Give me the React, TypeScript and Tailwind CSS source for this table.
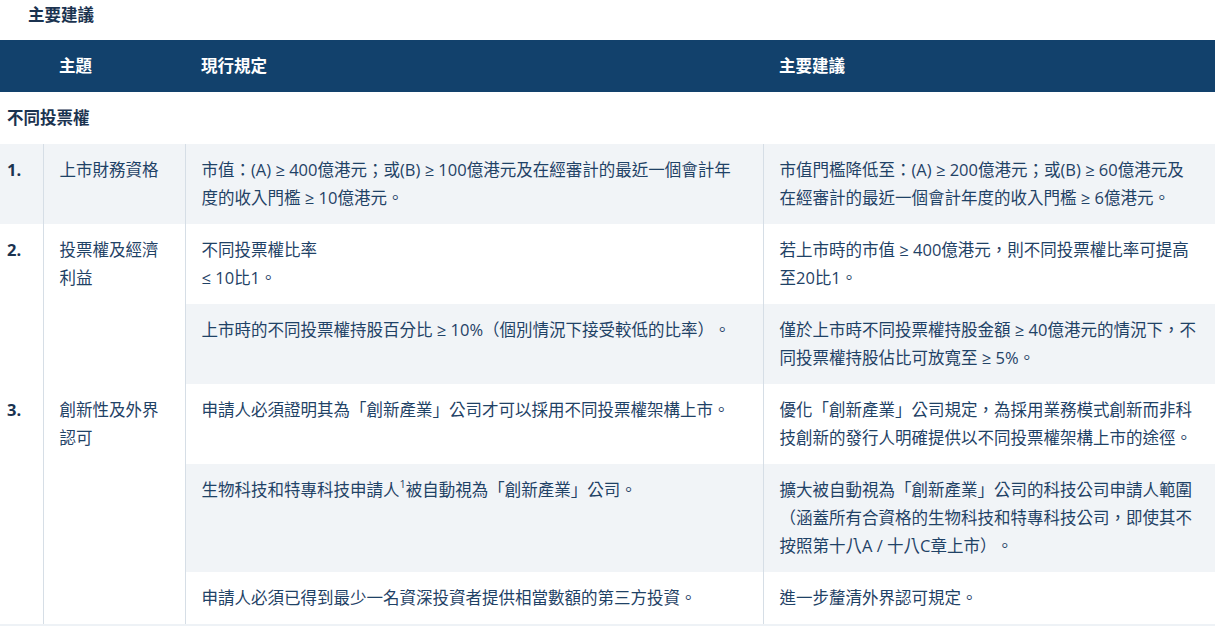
import React from 'react';

const font = { fontFamily: '"Open Sans", "Noto Sans CJK TC", sans-serif' };

interface Row {
  no?: string;
  topic?: string;
  span?: number;
  current: React.ReactNode;
  proposal: React.ReactNode;
  shaded: boolean;
}

const rows: Row[] = [
  {
    no: '1.',
    topic: '上市財務資格',
    span: 1,
    current: '市值：(A) ≥ 400億港元；或(B) ≥ 100億港元及在經審計的最近一個會計年度的收入門檻 ≥ 10億港元。',
    proposal: '市值門檻降低至：(A) ≥ 200億港元；或(B) ≥ 60億港元及在經審計的最近一個會計年度的收入門檻 ≥ 6億港元。',
    shaded: true,
  },
  {
    no: '2.',
    topic: '投票權及經濟利益',
    span: 2,
    current: (
      <>
        不同投票權比率
        <br />≤ 10比1。
      </>
    ),
    proposal: '若上市時的市值 ≥ 400億港元，則不同投票權比率可提高至20比1。',
    shaded: false,
  },
  {
    current: '上市時的不同投票權持股百分比 ≥ 10%（個別情況下接受較低的比率）。',
    proposal: '僅於上市時不同投票權持股金額 ≥ 40億港元的情況下，不同投票權持股佔比可放寬至 ≥ 5%。',
    shaded: true,
  },
  {
    no: '3.',
    topic: '創新性及外界認可',
    span: 3,
    current: '申請人必須證明其為「創新產業」公司才可以採用不同投票權架構上市。',
    proposal: '優化「創新產業」公司規定，為採用業務模式創新而非科技創新的發行人明確提供以不同投票權架構上市的途徑。',
    shaded: false,
  },
  {
    current: (
      <>
        生物科技和特專科技申請人<sup className="text-[11px] align-[3px] leading-none">1</sup>被自動視為「創新產業」公司。
      </>
    ),
    proposal: '擴大被自動視為「創新產業」公司的科技公司申請人範圍（涵蓋所有合資格的生物科技和特專科技公司，即使其不按照第十八A / 十八C章上市）。',
    shaded: true,
  },
  {
    current: '申請人必須已得到最少一名資深投資者提供相當數額的第三方投資。',
    proposal: '進一步釐清外界認可規定。',
    shaded: false,
  },
];

export default function App() {
  return (
    <div
      className="w-[1215px] h-[627px] overflow-hidden bg-white text-[16.5px] leading-[28px] text-[#1f4266] [text-spacing-trim:space-all]"
      style={font}
    >
      <div className="h-[40px] pl-[28px] pt-[1px] font-semibold text-[#1b3350]">主要建議</div>
      <table className="w-[1215px] table-fixed border-collapse border-b-2 border-[#eef2f6]">
        <colgroup>
          <col className="w-[43px]" />
          <col className="w-[142px]" />
          <col className="w-[578px]" />
          <col className="w-[452px]" />
        </colgroup>
        <thead>
          <tr className="h-[52px] bg-[#12416c] text-white font-bold">
            <th className="text-left pl-[7px]" />
            <th className="text-left px-4">主題</th>
            <th className="text-left px-4">現行規定</th>
            <th className="text-left px-4">主要建議</th>
          </tr>
        </thead>
        <tbody>
          <tr className="h-[52px]">
            <td colSpan={4} className="pl-[7px] font-bold text-[#1b3350]">
              不同投票權
            </td>
          </tr>
          {rows.map((r, i) => {
            const bg = r.shaded ? 'bg-[#f1f4f7]' : 'bg-white';
            const topBg = r.span === 1 && r.shaded ? 'bg-[#f1f4f7]' : 'bg-white';
            return (
              <tr key={i} className="align-top">
                {r.no && (
                  <td rowSpan={r.span} className={`${topBg} pl-[7px] py-3 font-bold text-[#1b3350]`}>
                    {r.no}
                  </td>
                )}
                {r.topic && (
                  <td rowSpan={r.span} className={`${topBg} border-l border-[#d6dee6] px-4 py-3`}>
                    {r.topic}
                  </td>
                )}
                <td className={`${bg} border-l border-[#d6dee6] px-4 py-3`}>{r.current}</td>
                <td className={`${bg} border-l border-[#d6dee6] px-4 py-3`}>{r.proposal}</td>
              </tr>
            );
          })}
        </tbody>
      </table>
    </div>
  );
}
